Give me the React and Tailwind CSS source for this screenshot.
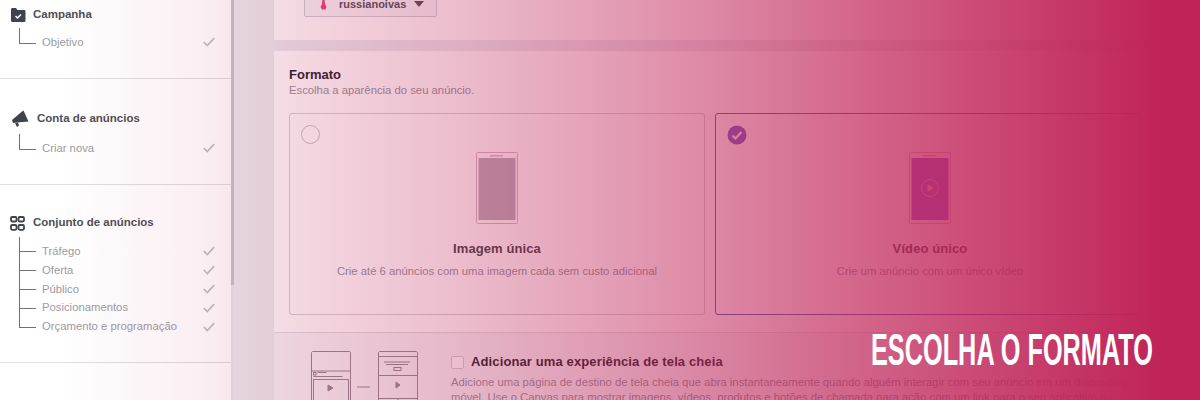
const Tick = () => (
  <svg width="12" height="10" viewBox="0 0 12 10" fill="none" className="shrink-0">
    <path d="M0.800 5 L4.300 8.500 L11.200 1.200" stroke="#bcbec4" strokeWidth="1.700" />
  </svg>
)

const FolderIcon = () => (
  <svg width="16" height="14" viewBox="0 0 16 14" className="shrink-0">
    <path d="M1 1.500C1 .7 1.600 0 2.400 0H6l1.400 2H14c.9 0 1.500.6 1.500 1.500v9c0 .9-.6 1.500-1.500 1.500H2.400C1.600 14 1 13.300 1 12.500Z" fill="#3f434a" />
    <path d="M5.500 8 L7.500 10 L11 6.500" stroke="#fff" strokeWidth="1.500" fill="none" />
  </svg>
)

const MegaphoneIcon = () => (
  <svg width="17" height="18" viewBox="0 0 17 18" className="shrink-0">
    <path d="M0 10 L10 1.500 L11.500 0.500 L16.500 11.500 L5 12.500 L1 13 Z" fill="#3f434a" />
    <path d="M3 13 L6 12.500 L7 15.500 L5 17 Z" fill="#3f434a" />
  </svg>
)

const GridIcon = () => (
  <svg width="15" height="15" viewBox="0 0 15 15" fill="none" stroke="#3f434a" strokeWidth="1.800" className="shrink-0">
    <rect x="1" y="1" width="5.500" height="4.500" rx="1.200" />
    <rect x="8.500" y="1" width="5.500" height="4.500" rx="1.200" />
    <rect x="1" y="9" width="5.500" height="4.800" rx="1.200" />
    <rect x="8.500" y="9" width="5.500" height="4.800" rx="1.200" />
  </svg>
)

// branch rows of the sidebar tree
function TreeRow({ label, last }) {
  return (
    <div className="flex h-[18.800px] items-stretch pl-[19px] pr-[16px]">
      <div className="flex w-[17px] shrink-0 flex-col">
        <div className="h-[calc(50%+1px)] border-b border-l border-[#6f7277]" />
        {!last && <div className="grow border-l border-[#6f7277]" />}
      </div>
      <div className="flex grow items-center justify-between pl-[6px]">
        <span className="text-[11.300px] text-[#9b9b9f]">{label}</span>
        <Tick />
      </div>
    </div>
  )
}

function SingleRow({ label }) {
  return (
    <div className="flex items-start pl-[19px] pr-[16px]">
      <div className="h-[16px] w-[17px] shrink-0 border-b border-l border-[#6f7277]" />
      <div className="flex grow items-center justify-between pl-[6px] pt-[5px]">
        <span className="text-[11.300px] leading-[18px] text-[#9b9b9f]">{label}</span>
        <Tick />
      </div>
    </div>
  )
}

const PhoneArt = ({ video }) => (
  <svg width="42" height="72" viewBox="0 0 42 72" fill="none" className="shrink-0">
    <rect x="0.500" y="0.500" width="41" height="71" rx="1" stroke={video ? '#e8b0c4' : '#d4b8c6'} strokeWidth="1" fill="#fff" />
    <rect x="14" y="3" width="13" height="1.500" fill={video ? '#e8b0c4' : '#d4b8c6'} />
    <rect x="2.500" y="6" width="37" height="62" fill={video ? '#8f5cd6' : '#b6adb8'} />
    {video && <circle cx="21" cy="36" r="8.500" stroke="#f0a8d0" strokeWidth="1" />}
    {video && <path d="M18.500 32 L25 36 L18.500 40 Z" fill="#f0a8d0" />}
  </svg>
)

function FormatCard({ title, text, selected, widthClass }) {
  return (
    <div className={`relative flex h-[202px] flex-col items-center rounded-[3px] border ${selected ? 'border-[#4a5fb0]' : 'border-[#d5d0d4]'} ${widthClass}`}>
      <div className="absolute left-[11px] top-[11px]">
        {selected ? (
          <svg width="20" height="20" viewBox="0 0 20 20">
            <circle cx="10" cy="10" r="9.500" fill="#6d5ec4" />
            <path d="M5.500 10.500 L8.500 13.500 L14.500 7" stroke="#fff" strokeWidth="2.200" fill="none" />
          </svg>
        ) : (
          <div className="h-[19px] w-[19px] rounded-full border border-[#bfc3c9] bg-white" />
        )}
      </div>
      <div className="mt-[38px]"><PhoneArt video={selected} /></div>
      <h3 className="mt-[16px] text-[13px] font-bold leading-[18px] tracking-[0.1px] text-[#3a3f46]">{title}</h3>
      <p className="mt-[5px] text-[11.300px] leading-[16px] text-[#90949c]">{text}</p>
    </div>
  )
}

const CanvasArt = () => (
  <svg width="108" height="52" viewBox="0 0 108 52" fill="none" stroke="#8f8a92" strokeWidth="1" className="shrink-0">
    <path d="M0.500 52V2C0.500 1 1 .5 2 .5h36c1 0 1.500.5 1.500 1.500V52" />
    <path d="M0.500 20h39" />
    <rect x="2.500" y="21.500" width="2.500" height="2.500" />
    <path d="M6.500 21.500h9M2.500 25.500h29" />
    <rect x="2.500" y="28.500" width="35" height="24" />
    <path d="M17 34l5 3-5 3Z" fill="#8f8a92" />
    <path d="M46 36h13" />
    <path d="M67.500 52V2c0-1 .5-1.500 1.500-1.500h36c1 0 1.500.5 1.500 1.500V52" />
    <path d="M67.500 5.500h39M67.500 24.500h39M73 11h26M75 13.500h22" />
    <rect x="83" y="16.500" width="7" height="3" />
    <path d="M85 31l4 3-4 3Z" fill="#8f8a92" />
    <path d="M67.500 47.500h39M87 47.500V52" />
  </svg>
)

export default function App() {
  return (
    <div className="relative flex h-[400px] w-[1200px] overflow-hidden bg-[#e9ebee] font-['Liberation_Sans',Arial,sans-serif]">
      <aside className="flex w-[231px] shrink-0 flex-col bg-white">
        <section className="h-[79px] border-b border-[#dddfe2] pt-[7px]">
          <div className="mb-[5px] flex h-[16px] items-center gap-[7px] pl-[10px]">
            <FolderIcon />
            <span className="text-[11.500px] font-bold text-[#4b4f56]">Campanha</span>
          </div>
          <SingleRow label="Objetivo" />
        </section>
        <section className="h-[106px] border-b border-[#dddfe2] pt-[30px]">
          <div className="mb-[5px] flex h-[20px] items-center gap-[8px] pl-[12px]">
            <MegaphoneIcon />
            <span className="text-[11.500px] font-bold text-[#4b4f56]">Conta de anúncios</span>
          </div>
          <SingleRow label="Criar nova" />
        </section>
        <section className="h-[178px] border-b border-[#dddfe2] pt-[30px]">
          <div className="flex h-[16px] items-center gap-[8px] pl-[10px]">
            <GridIcon />
            <span className="text-[11.500px] font-bold text-[#4b4f56]">Conjunto de anúncios</span>
          </div>
          <div className="ml-[19px] mt-[6px] h-[5px] border-l border-[#6f7277]" />
          <TreeRow label="Tráfego" />
          <TreeRow label="Oferta" />
          <TreeRow label="Público" />
          <TreeRow label="Posicionamentos" />
          <TreeRow label="Orçamento e programação" last />
        </section>
      </aside>

      <div className="flex w-[3px] shrink-0 flex-col bg-[#e6e6e6]">
        <div className="h-[285px] bg-[#c4c4c4]" />
      </div>

      <main className="ml-[40px] flex w-[882px] shrink-0 flex-col">
        <div className="h-[40px] shrink-0 bg-white pl-[30px]">
          <div className="-mt-[10px] flex h-[27px] w-[133px] items-center rounded-[2px] border border-[#ccd0d5] bg-[#f6f7f9] pl-[15px] pt-[1px]">
            <svg width="7" height="12" viewBox="0 0 7 12" className="shrink-0">
              <path d="M2.500 0h2l.5 6 1.500 3-1 2.500h-3.500L.5 9 2 6Z" fill="#e8407f" />
            </svg>
            <span className="ml-[12px] text-[11px] font-bold leading-[14px] text-[#4b4f56]">russianoivas</span>
            <span className="ml-[8px] h-0 w-0 border-x-[5.500px] border-t-[6px] border-x-transparent border-t-[#4b4f56]" />
          </div>
        </div>
        <div className="h-[11px] shrink-0" />
        <div className="h-[282px] shrink-0 border-b border-[#dddfe2] bg-white px-[15px] pt-[16px]">
          <h2 className="text-[13px] font-bold leading-[16px] text-[#1d2129]">Formato</h2>
          <p className="text-[11.300px] leading-[15px] text-[#90949c]">Escolha a aparência do seu anúncio.</p>
          <div className="mt-[15px] flex gap-[10px]">
            <FormatCard widthClass="w-[417px]" title="Imagem única" text="Crie até 6 anúncios com uma imagem cada sem custo adicional" />
            <FormatCard widthClass="w-[427px] pl-[4px]" selected title="Vídeo único" text="Crie um anúncio com um único vídeo" />
          </div>
        </div>
        <div className="flex h-[67px] shrink-0 overflow-hidden bg-[#f6f7f9] pl-[37px] pt-[18px]">
          <CanvasArt />
          <div className="ml-[32px] w-[680px]">
            <div className="flex items-center gap-[7px] pt-[2px]">
              <span className="h-[13px] w-[13px] rounded-[2px] border border-[#ccd0d5] bg-white" />
              <span className="text-[13px] font-bold leading-[18px] tracking-[0.12px] text-[#1d2129]">Adicionar uma experiência de tela cheia</span>
            </div>
            <p className="mt-[4px] text-[11.300px] leading-[15px] text-[#90949c]">
              Adicione uma página de destino de tela cheia que abra instantaneamente quando alguém interagir com seu anúncio em um dispositivo móvel. Use o Canvas para mostrar imagens, vídeos, produtos e botões de chamada para ação com um link para o seu aplicativo ou
            </p>
          </div>
        </div>
      </main>

      <div className="absolute inset-0 bg-[linear-gradient(90deg,rgba(192,35,88,0)_5%,rgba(192,35,88,0.08)_17%,rgba(192,35,88,0.18)_25%,rgba(192,35,88,0.29)_37%,rgba(192,35,88,0.43)_50%,rgba(192,35,88,0.55)_60%,rgba(192,35,88,0.68)_70%,rgba(192,35,88,0.8)_80%,rgba(192,35,88,0.92)_90%,#c02358_97%)]" />

      <h1 className="absolute left-[871px] top-[324px] origin-left scale-x-[0.562] whitespace-nowrap text-[45px] font-bold leading-[52px] text-white">ESCOLHA O FORMATO</h1>
    </div>
  )
}
